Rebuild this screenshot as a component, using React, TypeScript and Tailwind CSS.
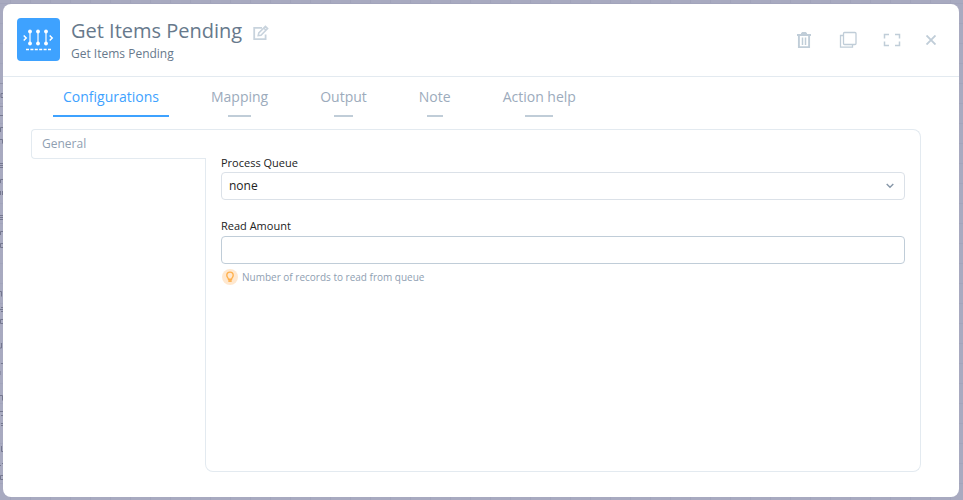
import { useState } from "react"

const tabs = ["Configurations", "Mapping", "Output", "Note", "Action help"]

const QueueLogo = () => (
  <svg width="43" height="43" viewBox="0 0 43 43" className="rounded bg-[#3ea2ff]" aria-hidden="true">
    <g stroke="#fff" fill="none">
      <path d="M13 13v12.500M21 13v12.500M29 13v12.500" strokeWidth="1.4" opacity="0.85" />
      <path d="M6.700 17.500l2.500 2.500-2.500 2.500M32.700 17.500l2.500 2.500-2.500 2.500" strokeWidth="1.5" />
      <path d="M9 31.500h25" strokeWidth="1.5" strokeDasharray="3 1.400" />
    </g>
    <g fill="#fff">
      <circle cx="13" cy="13.500" r="1.900" />
      <circle cx="21" cy="13.500" r="1.900" />
      <circle cx="29" cy="13.500" r="1.900" />
      <circle cx="13" cy="25.500" r="1.900" />
      <circle cx="21" cy="25.500" r="1.900" />
      <circle cx="29" cy="25.500" r="1.900" />
    </g>
  </svg>
)

const EditIcon = () => (
  <svg width="16" height="16" viewBox="0 0 16 16" fill="none" stroke="#c8d3dd" aria-hidden="true">
    <path d="M9 2.800H1.200v11.400h11.400V9.500" strokeWidth="1.800" />
    <path d="M5.200 10.600l.6-2.600 6.600-6.600 2.200 2.200-6.600 6.600zM10.800 3l2.200 2.200" strokeWidth="1.600" />
  </svg>
)

const TrashIcon = () => (
  <svg width="16" height="16" viewBox="0 0 16 16" fill="none" stroke="#c0cdd8" aria-hidden="true">
    <path d="M1 3h14" strokeWidth="2" />
    <path d="M5 2.500l1-2h4l1 2z" fill="#c0cdd8" />
    <path d="M2.900 4v11.100h10.200V4" strokeWidth="1.900" />
    <path d="M6.500 5.500v7.500M9.500 5.500v7.500" strokeWidth="1.500" />
  </svg>
)

const CopyIcon = () => (
  <svg width="18" height="18" viewBox="0 0 18 18" fill="none" stroke="#c0cdd8" strokeWidth="1.300" aria-hidden="true">
    <rect x="4.500" y="1.500" width="12.500" height="12" rx="1" />
    <path d="M4.500 4.500H1.500v11.700h12v-2.700" />
  </svg>
)

const ExpandIcon = () => (
  <svg width="18" height="14" viewBox="0 0 18 14" fill="none" stroke="#c0cdd8" strokeWidth="1.500" aria-hidden="true">
    <path d="M6 1.500H1.500v4M12 1.500h4.500v4M1.500 8.500v4H6M16.500 8.500v4H12" />
  </svg>
)

const CloseIcon = () => (
  <svg width="10" height="10" viewBox="0 0 10 10" fill="none" stroke="#c0cdd8" strokeWidth="1.900" aria-hidden="true">
    <path d="M.5.500l9 9M9.500.500l-9 9" />
  </svg>
)

const HintIcon = () => (
  <svg width="16" height="16" viewBox="0 0 16 16" fill="none" stroke="#ffb04d" aria-hidden="true">
    <circle cx="8" cy="8" r="8" fill="#ffe8cf" stroke="none" />
    <path d="M6.500 10.300C6.500 9 4.800 8.500 4.800 6.300a3.200 3.200 0 0 1 6.400 0c0 2.200-1.700 2.700-1.700 4z" strokeWidth="1.400" />
    <path d="M6.300 12h3.400" strokeWidth="1.800" />
  </svg>
)

const Chevron = () => (
  <svg width="8" height="6" viewBox="0 0 8 6" fill="none" stroke="#8797a8" strokeWidth="1.400" className="pointer-events-none absolute top-[11px] right-[11px]" aria-hidden="true">
    <path d="M.7 1L4 4.300 7.300 1" />
  </svg>
)

// edges of the dimmed page that show beside the dialog
const PageBehind = () => (
  <svg width="3" height="500" viewBox="0 0 3 500" fill="none" stroke="#74778f" className="absolute top-0 left-0" aria-hidden="true">
    <path d="M0 83.500h3M0 106.500h3" stroke="#9193a9" />
    <path d="M3 93.500H1v4h2M0 115.500h3M.5 132v-4.500H3M0 139.500h2.500v4M3 163.500H0M0 165.500h3M0 167.500h3M.5 183v-3.500H3M.5 191v4M2.500 191v4" />
    <path d="M0 215.500h3M0 217.500h3M0 219.500h3M.5 235v-3.500H3M3 243.500H.5v4H3M0 291.500h1.500v5M1 307.500h2M0 309.500h3M1 311.500h2M3 319.500H.5v4H3" />
    <path d="M1.500 343v5H0M1 363.500h2M0 371v4M0 395.500h2.500v5M0 411.500h3M1 415.500h2M1 423.500h2M1 425.500h2M1.500 446v5.500H3M2 463.500h1M0 465.500h1M3 475.500H.5v4H3" />
  </svg>
)

export default function App() {
  const [activeTab, setActiveTab] = useState("Configurations")
  const [amount, setAmount] = useState("")

  return (
    <div className="relative flex min-h-screen flex-col bg-[#a8aac0] bg-[linear-gradient(to_right,#a2a4bb_1px,transparent_1px),linear-gradient(to_bottom,#a2a4bb_1px,transparent_1px)] bg-[size:20px_20px] bg-[position:10px_3px] pt-1 pr-1 pb-[3px] pl-[3px] font-['Open_Sans',sans-serif]">
      <PageBehind />
      <div role="dialog" aria-labelledby="title" className="flex flex-1 flex-col rounded-lg bg-white">
        <header className="flex items-start justify-between border-b border-[#e3eaf0] pt-[14px] pr-[23px] pb-3 pl-[14px]">
          <div className="flex gap-[11px]">
            <QueueLogo />
            <div className="text-[#67798c]">
              <div className="flex items-center gap-[11px]">
                <h1 id="title" className="text-[20px] leading-[26px]">Get Items Pending</h1>
                <button type="button" aria-label="Rename" className="pt-1"><EditIcon /></button>
              </div>
              <p className="text-[12px] leading-5">Get Items Pending</p>
            </div>
          </div>
          <div className="flex h-11 items-center gap-6">
            <button type="button" aria-label="Delete" className="flex w-5 justify-center"><TrashIcon /></button>
            <button type="button" aria-label="Duplicate" className="flex w-5 justify-center"><CopyIcon /></button>
            <button type="button" aria-label="Full screen" className="flex w-5 justify-center"><ExpandIcon /></button>
            <button type="button" aria-label="Close"><CloseIcon /></button>
          </div>
        </header>

        <div role="tablist" className="flex gap-8 pt-[10px] pl-[50px]">
          {tabs.map((tab) => (
            <button
              key={tab}
              type="button"
              role="tab"
              aria-selected={tab === activeTab}
              onClick={() => setActiveTab(tab)}
              className={tab === activeTab
                ? "flex flex-col items-center text-[14px] leading-5 text-[#3ea2ff]"
                : "flex flex-col items-center text-[14px] leading-5 text-[#9cabbc]"}
            >
              <span className="px-[10px] pb-2">{tab}</span>
              <span className={tab === activeTab ? "h-[2px] w-full bg-[#3ea2ff]" : "h-[2px] w-[30%] bg-[#c0cdd8]"} />
            </button>
          ))}
        </div>

        <div className="mt-3 mr-[38px] mb-[25px] ml-7 flex flex-1">
          <nav className="w-[174px]">
            <a href="#general" className="block rounded-l border border-r-0 border-[#e3eaf0] px-[10px] py-1 text-[12px] leading-5 text-[#8fa0b2]">
              General
            </a>
          </nav>
          <section id="general" className="flex flex-1 flex-col">
            <div className="h-[29px] rounded-tr-lg border-t border-r border-[#e3eaf0]" />
            <div className="flex-1 rounded-b-lg border border-t-0 border-[#e3eaf0] px-[15px]">
              <div className="-mt-[3px]">
                <label htmlFor="queue" className="block text-[11px] leading-4 text-[#222]">Process Queue</label>
                <div className="relative mt-px">
                  <select id="queue" className="block h-7 w-full appearance-none rounded border border-[#dbe1e8] bg-white px-[7px] text-[12px] text-[#222]">
                    <option>none</option>
                  </select>
                  <Chevron />
                </div>
              </div>
              <div className="mt-[18px]">
                <label htmlFor="amount" className="block text-[11px] leading-4 text-[#222]">Read Amount</label>
                <input
                  id="amount"
                  type="text"
                  value={amount}
                  onChange={(e) => setAmount(e.target.value)}
                  aria-describedby="amount-hint"
                  className="mt-[2px] block h-7 w-full rounded border border-[#c0cdd8] px-[7px] text-[12px] text-[#222]"
                />
                <p id="amount-hint" className="mt-[5px] flex items-center gap-1 pl-px text-[10px] leading-4 text-[#8fa0b2]">
                  <HintIcon />
                  Number of records to read from queue
                </p>
              </div>
            </div>
          </section>
        </div>
      </div>
    </div>
  )
}
